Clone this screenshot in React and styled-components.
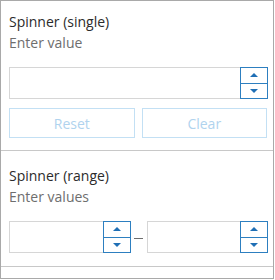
import React from "react";
import styled, { createGlobalStyle } from "styled-components";

const GlobalStyle = createGlobalStyle`
  html, body {
    margin: 0;
    padding: 0;
    background: #fff;
  }
  body {
    font-family: "Open Sans", Lato, sans-serif;
  }
`;

const Panel = styled.div`
  width: 272px;
  height: 277px;
  border: 1px solid #a9a9a9;
  background: #fff;
  display: flex;
  flex-direction: column;
`;

const Section = styled.section`
  padding: ${(p) => p.$pad};
  border-bottom: 1px solid #c8c8c8;
`;

const Title = styled.div`
  font-size: 14px;
  line-height: 20px;
  color: #2b2b2b;
`;

const Hint = styled.div`
  font-size: 14px;
  line-height: 21px;
  color: #6e6e6e;
  margin-bottom: 14px;
`;

const Field = styled.div`
  display: flex;
  flex: 1;
  min-width: 0;
  height: 32px;
  box-sizing: border-box;
  border: 1px solid #d6d6d6;
  background: #fff;
`;

const Input = styled.input`
  flex: 1;
  width: 0;
  min-width: 0;
  border: none;
  outline: none;
  padding: 0 6px;
  font: inherit;
  background: transparent;
`;

const Stepper = styled.div`
  width: 28px;
  margin: -1px -1px -1px 0;
  display: flex;
  flex-direction: column;
`;

const StepButton = styled.button`
  flex: 1;
  padding: 0;
  margin: 0;
  background: #fff;
  border: 1px solid #2d7fc0;
  & + & {
    border-top: none;
  }
  display: flex;
  align-items: center;
  justify-content: center;
  cursor: pointer;
`;

const Arrow = styled.span`
  width: 0;
  height: 0;
  border-left: 4px solid transparent;
  border-right: 4px solid transparent;
  ${(p) =>
    p.$up
      ? "border-bottom: 4px solid #1f6fb5;"
      : "border-top: 4px solid #1f6fb5;"}
`;

const Buttons = styled.div`
  display: flex;
  gap: 7px;
  margin-top: 9px;
  padding-right: 1px;
`;

const Action = styled.button`
  flex: 1;
  height: 30px;
  background: #fff;
  border: 1px solid #c3e0f4;
  color: #b0d3ee;
  font: inherit;
  font-size: 14px;
`;

const Range = styled.div`
  display: flex;
  align-items: center;
`;

const Dash = styled.span`
  flex: none;
  width: 9px;
  height: 1px;
  background: #6e6e6e;
  margin: 2px 4px 0 3px;
`;

const Spinner = () => (
  <Field>
    <Input />
    <Stepper>
      <StepButton>
        <Arrow $up />
      </StepButton>
      <StepButton>
        <Arrow />
      </StepButton>
    </Stepper>
  </Field>
);

export default function App() {
  return (
    <>
      <GlobalStyle />
      <Panel>
        <Section $pad="11px 5px 12px 8px">
          <Title>Spinner (single)</Title>
          <Hint>Enter value</Hint>
          <Spinner />
          <Buttons>
            <Action disabled>Reset</Action>
            <Action disabled>Clear</Action>
          </Buttons>
        </Section>
        <Section $pad="15px 5px 13px 8px">
          <Title>Spinner (range)</Title>
          <Hint>Enter values</Hint>
          <Range>
            <Spinner />
            <Dash />
            <Spinner />
          </Range>
        </Section>
      </Panel>
    </>
  );
}
